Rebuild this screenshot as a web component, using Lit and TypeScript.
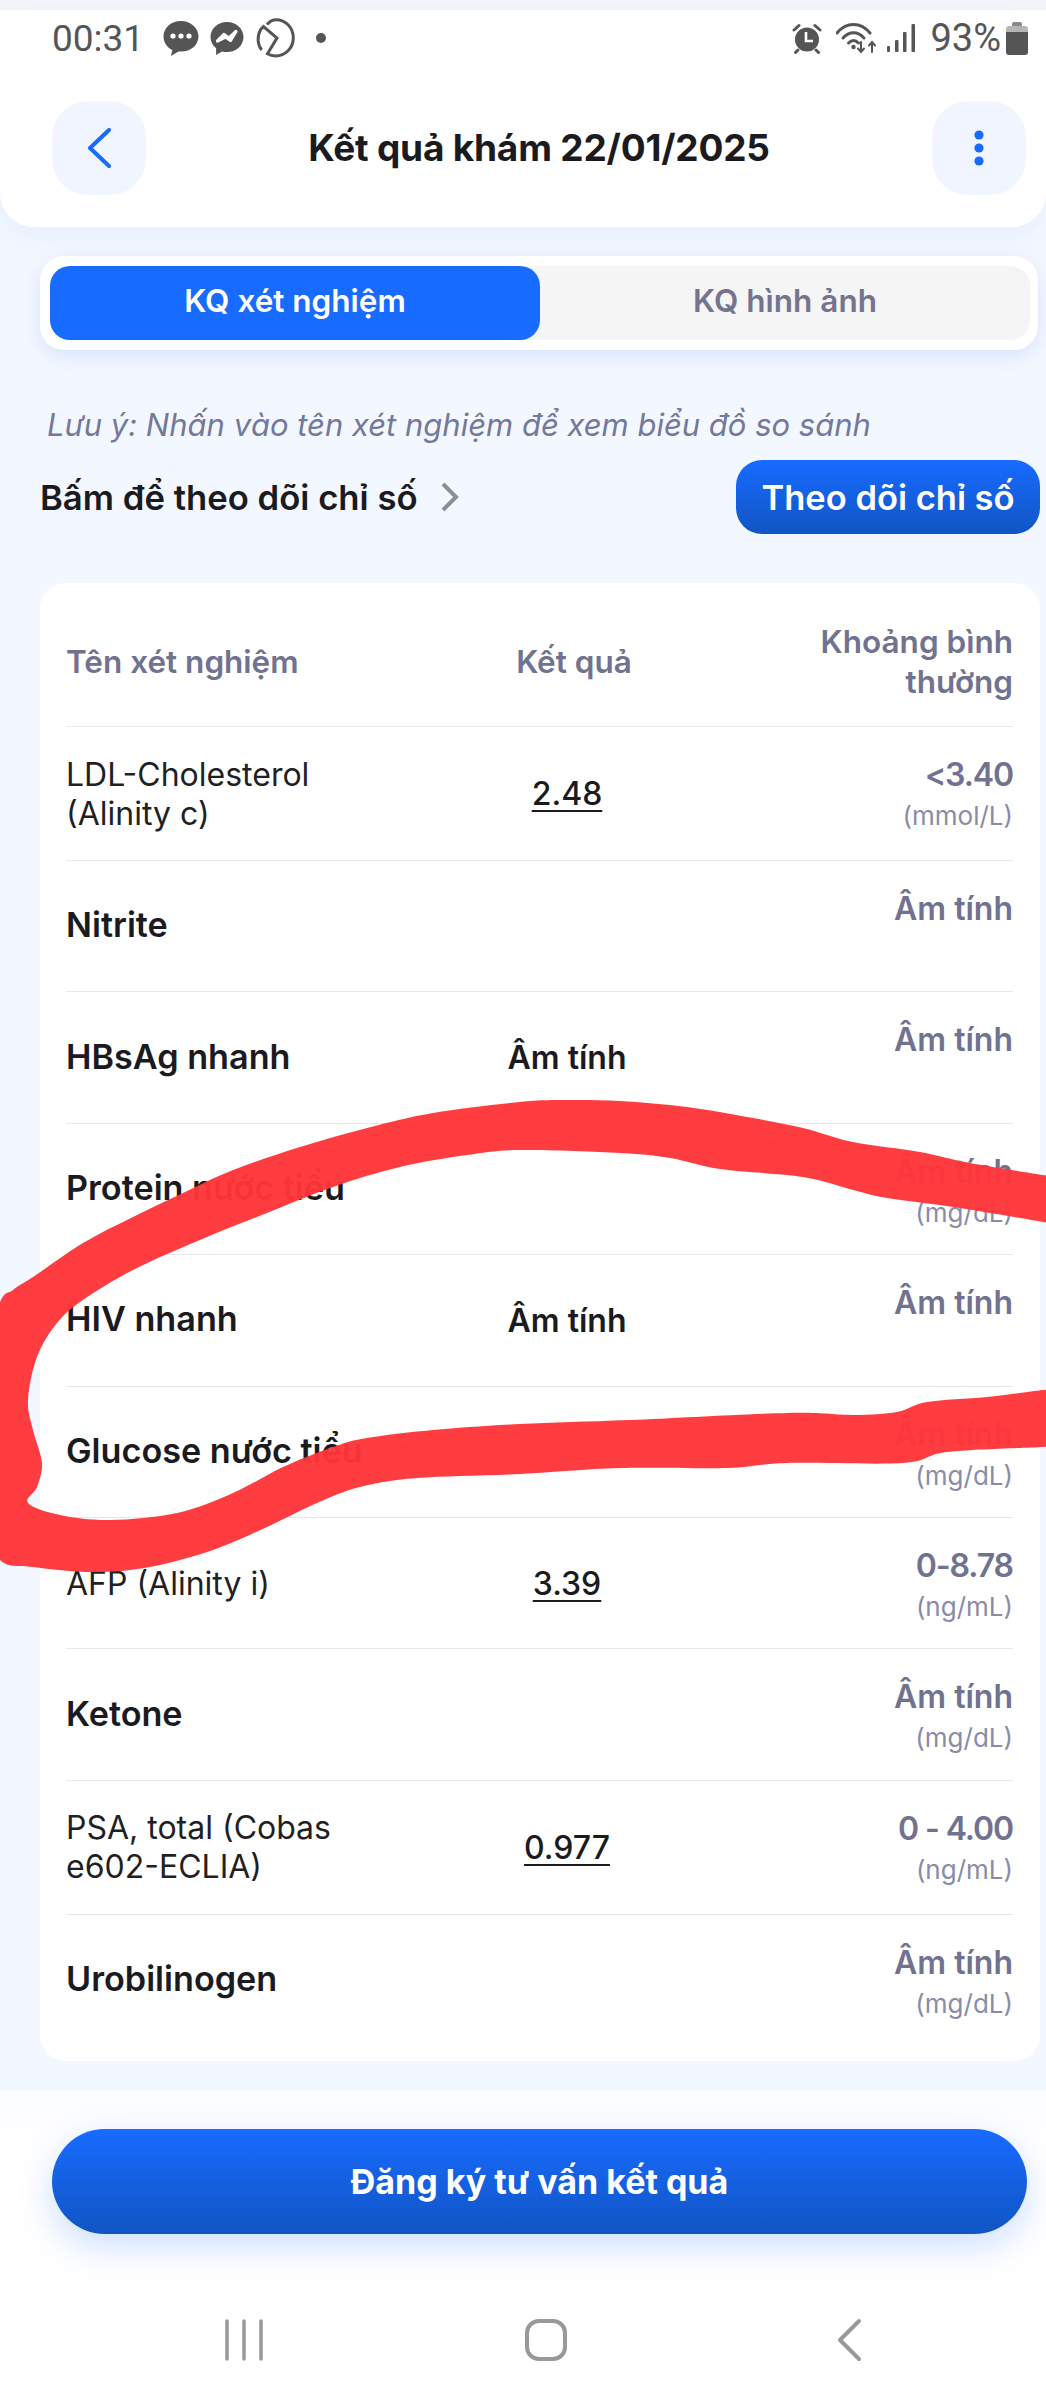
import { LitElement, html, css, svg } from "lit";
import { customElement } from "lit/decorators.js";

type Row = { name: string; bold: boolean; value?: string; link?: boolean; range: string; unit?: string };

const ROWS: Row[] = [
  { name: "LDL-Cholesterol (Alinity c)", bold: false, value: "2.48", link: true, range: "<3.40", unit: "(mmol/L)" },
  { name: "Nitrite", bold: true, range: "Âm tính" },
  { name: "HBsAg nhanh", bold: true, value: "Âm tính", range: "Âm tính" },
  { name: "Protein nước tiểu", bold: true, range: "Âm tính", unit: "(mg/dL)" },
  { name: "HIV nhanh", bold: true, value: "Âm tính", range: "Âm tính" },
  { name: "Glucose nước tiểu", bold: true, range: "Âm tính", unit: "(mg/dL)" },
  { name: "AFP (Alinity i)", bold: false, value: "3.39", link: true, range: "0-8.78", unit: "(ng/mL)" },
  { name: "Ketone", bold: true, range: "Âm tính", unit: "(mg/dL)" },
  { name: "PSA, total (Cobas e602-ECLIA)", bold: false, value: "0.977", link: true, range: "0 - 4.00", unit: "(ng/mL)" },
  { name: "Urobilinogen", bold: true, range: "Âm tính", unit: "(mg/dL)" },
];

// Outline of the hand-drawn red mark, traced from the right edge along the outside, then back along the inside.
const MARK_OUTER: number[][] = [
  [1060, 1178], [1043, 1175], [970, 1163], [920, 1152], [853, 1142], [803, 1128], [753, 1118], [687, 1107], [620, 1101], [563, 1100],
  [520, 1102], [433, 1113], [367, 1128], [300, 1147], [233, 1170], [183, 1193], [133, 1217], [83, 1243], [33, 1277], [13, 1290],
  [-2, 1307], [-30, 1400], [-30, 1500], [-2, 1558], [33, 1567], [93, 1572], [150, 1567], [213, 1550], [267, 1527], [317, 1503],
  [360, 1487], [417, 1478], [520, 1474], [620, 1468], [727, 1468], [787, 1463], [903, 1463], [947, 1452], [1043, 1447], [1060, 1446],
];
const MARK_INNER: number[][] = [
  [1060, 1388], [1043, 1390], [987, 1397], [927, 1402], [897, 1412], [853, 1415], [787, 1413], [630, 1420], [520, 1424], [433, 1430],
  [367, 1438], [333, 1447], [283, 1467], [233, 1493], [177, 1513], [110, 1520], [60, 1515], [28, 1503], [37, 1487], [42, 1463],
  [33, 1430], [28, 1400], [37, 1357], [57, 1323], [83, 1300], [133, 1270], [200, 1240], [267, 1213], [333, 1187], [400, 1167],
  [467, 1155], [520, 1150], [620, 1153], [670, 1158], [720, 1169], [803, 1177], [853, 1190], [887, 1198], [953, 1207], [1043, 1222], [1060, 1226],
];

function smooth(p: number[][]): string {
  let d = `M${p[0][0]} ${p[0][1]}`;
  for (let i = 0; i < p.length - 1; i++) {
    const a = p[Math.max(i - 1, 0)], b = p[i], c = p[i + 1], e = p[Math.min(i + 2, p.length - 1)];
    const c1x = b[0] + (c[0] - a[0]) / 6, c1y = b[1] + (c[1] - a[1]) / 6;
    const c2x = c[0] - (e[0] - b[0]) / 6, c2y = c[1] - (e[1] - b[1]) / 6;
    d += `C${c1x.toFixed(1)} ${c1y.toFixed(1)} ${c2x.toFixed(1)} ${c2y.toFixed(1)} ${c[0]} ${c[1]}`;
  }
  return d;
}
const MARK_D = smooth(MARK_OUTER) + smooth(MARK_INNER).replace(/^M/, "L") + "Z";

const iconBubble = svg`<svg width="36" height="37" viewBox="0 0 36 37"><path fill="#555" d="M18 1C8 1 .5 7.800.5 16.500c0 6 3.600 11 8.800 13.500l-1.300 6 7.500-4.600c.8.100 1.600.200 2.500.200 10 0 17.500-6.800 17.500-15.100S28 1 18 1z"/><circle cx="10" cy="16" r="2.600" fill="#fff"/><circle cx="18" cy="16" r="2.600" fill="#fff"/><circle cx="26" cy="16" r="2.600" fill="#fff"/></svg>`;
const iconMessenger = svg`<svg width="34" height="35" viewBox="0 0 34 35"><path fill="#555" d="M17 1C7.700 1 .5 7.700.5 16c0 4.600 2.200 8.600 5.600 11.300V34l6-3.500c1.600.4 3.200.6 4.900.6 9.300 0 16.500-6.800 16.500-15.100S26.300 1 17 1z"/><path fill="none" stroke="#fff" stroke-width="3.200" stroke-linejoin="round" stroke-linecap="round" d="M7.500 20l6.500-6.500 5 3.500 7-6.500-5.500 9-5-3.500z"/></svg>`;
const iconCircle = svg`<svg width="40" height="40" viewBox="0 0 40 40"><path fill="none" stroke="#555" stroke-width="3" d="M12 6.500C15 3 18.500 1.700 21 1.700c9.800 0 17.300 8 17.300 18.300 0 10-8 18-17.800 18-3 0-5.500-.7-8-2.200L22 20 8.500 8.500l-2.800 3c-4 7-3.200 15.500 1 20.500"/></svg>`;
const iconAlarm = svg`<svg width="30" height="31" viewBox="0 0 30 31"><path fill="none" stroke="#555" stroke-width="3" stroke-linecap="round" d="M2 7l5-4.500M28 7l-5-4.500M6 27l-2.500 2.500M24 27l2.500 2.500"/><circle cx="15" cy="16.500" r="12" fill="#555"/><path fill="none" stroke="#fff" stroke-width="2.600" d="M14 9v9h7"/></svg>`;
const iconWifi = svg`<svg width="44" height="32" viewBox="0 0 44 32"><g fill="none" stroke="#555" stroke-width="3" stroke-linecap="round"><path d="M1 11C10-.5 25-.5 34 11"/><path d="M7 16c6-7 15-7 21 0"/><path d="M12.500 21c3.500-3.500 6.500-3.500 10 0"/><path d="M25 20v10M22 26.500l3 3.500 3-3.500M36 30V20M33 23.500l3-3.500 3 3.500" stroke-width="2"/></g><circle cx="17.500" cy="25" r="2.200" fill="#555"/></svg>`;
const iconSignal = svg`<svg width="29" height="30" viewBox="0 0 29 30"><g fill="#555"><rect x="0" y="23" width="3" height="6" rx="1"/><rect x="8" y="17" width="3.500" height="12" rx="1"/><rect x="16" y="9" width="3.500" height="20" rx="1"/><rect x="24.500" y="1" width="3.500" height="28" rx="1"/></g></svg>`;
const iconBattery = svg`<svg width="22" height="33" viewBox="0 0 22 33"><rect x="6" y="0" width="10" height="5" rx="2" fill="#8a8a8a"/><path d="M3 4h16a3 3 0 0 1 3 3v3H0V7a3 3 0 0 1 3-3z" fill="#b5b5b5"/><path d="M0 10h22v20a3 3 0 0 1-3 3H3a3 3 0 0 1-3-3z" fill="#555"/></svg>`;

@customElement("app-root")
export class AppRoot extends LitElement {
  static styles = css`
    :host { display: block; width: 1046px; height: 2400px; background: #fff; font-family: Inter, "Noto Sans", sans-serif; color: #1b1b1f; position: relative; overflow: hidden; }
    .top-strip { height: 10px; background: #f3f5f9; }
    .shell { background: #f3f7ff; }
    .header { position: relative; z-index: 1; background: #fff; height: 217px; border-radius: 0 0 34px 34px; box-shadow: 0 8px 30px rgba(60,110,240,.07); display: flex; flex-direction: column; }
    .status { height: 56px; display: flex; align-items: center; padding: 0 18px 0 52px; color: #555; font-family: Roboto, sans-serif; font-size: 37px; }
    .status .time { width: 111px; }
    .status .left { display: flex; align-items: center; gap: 11px; }
    .status .dot { width: 10px; height: 10px; border-radius: 50%; background: #555; margin-left: 10px; }
    .status .spacer { flex: 1; }
    .status .right { display: flex; align-items: center; }
    .status .pct { font-size: 38px; margin: 0 5px 0 14px; }
    .gap-a { width: 14px; }
    .gap-b { width: 7px; }
    .nav { margin-top: 35px; padding: 0 20px 0 52px; display: flex; align-items: center; justify-content: space-between; }
    .round { width: 94px; height: 94px; border-radius: 36px; background: #f1f5ff; display: flex; align-items: center; justify-content: center; }
    .title { font-size: 37px; font-weight: 700; line-height: 44px; color: #1b1b1f; letter-spacing: -.2px; }

    .main { height: 1863px; padding: 29px 6px 0 40px; box-sizing: border-box; }
    .tabs { margin-right: 2px; height: 94px; border-radius: 24px; background: #fff; box-shadow: 0 6px 18px rgba(60,110,240,.14); padding: 10px 8px 10px 10px; box-sizing: border-box; display: flex; }
    .tabs-inner { flex: 1; display: flex; background: #f5f5f6; border-radius: 20px; }
    .tab { display: flex; align-items: center; justify-content: center; padding-bottom: 5px; font-size: 31.500px; font-weight: 600; border-radius: 20px; color: #74748f; flex: 1; }
    .tab.on { flex: 0 0 490px; background: #186bff; color: #fff; }
    .note { margin: 55px 0 0 7px; line-height: 40px; font-size: 31px; font-style: italic; color: #74789a; }
    .act { margin-top: 15px; display: flex; align-items: center; justify-content: space-between; }
    .act-l { display: flex; align-items: center; gap: 22px; font-size: 34.700px; font-weight: 600; color: #1b1b1f; }
    .act-b { width: 304px; height: 74px; border-radius: 26px; background: linear-gradient(#186bff, #1155c4); color: #fff; font-size: 34.500px; font-weight: 600; display: flex; align-items: center; justify-content: center; }

    .card { margin-top: 49px; height: 1478px; box-sizing: border-box; background: #fff; border-radius: 26px; padding: 0 27px 0 26px; }
    .grid { display: grid; grid-template-columns: 401px 200px 1fr; }
    .thead { height: 144px; padding-top: 14px; box-sizing: border-box; align-items: center; border-bottom: 1.500px solid #e8e9ee; color: #70728f; font-size: 31.500px; font-weight: 600; line-height: 40px; }
    .thead .c { text-align: center; padding-left: 14px; }
    .thead .r { text-align: right; }
    .row { min-height: 131.400px; box-sizing: border-box; border-bottom: 1.500px solid #e8e9ee; align-items: center; }
    .row:last-child { border-bottom: none; }
    .name { padding: 27.500px 0; font-size: 32px; line-height: 39px; font-weight: 400; color: #1f1f24; max-width: 320px; }
    .name.b { padding: 26px 0 29px; font-size: 34.200px; font-weight: 600; color: #1b1b1f; max-width: none; }
    .val { text-align: center; font-size: 32px; font-weight: 600; color: #1b1b1f; }
    .val.link { font-weight: 500; text-decoration: underline; text-underline-offset: 5px; text-decoration-thickness: 2px; }
    .rng { align-self: start; padding-top: 28px; text-align: right; }
    .rng .v { font-size: 32px; font-weight: 600; line-height: 40px; color: #70728f; }
    .rng .v.num { letter-spacing: -1.100px; }
    .rng .u { font-size: 26px; line-height: 42px; color: #8a8ca6; }

    .footer { height: 310px; box-sizing: border-box; padding: 39px 19px 0 52px; background: linear-gradient(#fbfcff, #fff 60px); }
    .cta { height: 105px; border-radius: 53px; background: linear-gradient(#186bff, #1155c4); box-shadow: 0 12px 36px rgba(24,107,255,.22); color: #fff; font-size: 34px; font-weight: 700; display: flex; align-items: center; justify-content: center; }
    .sysnav { margin-top: 84px; display: grid; grid-template-columns: 301px 312px 26px; padding-left: 171px; align-items: center; }
    .mark { position: absolute; left: 0; top: 0; pointer-events: none; z-index: 2; }
  `;

  render() {
    return html`
      <div class="top-strip"></div>
      <div class="shell">
        <header class="header">
          <div class="status">
            <span class="time">00:31</span>
            <span class="left">${iconBubble}${iconMessenger}${iconCircle}<span class="dot"></span></span>
            <span class="spacer"></span>
            <span class="right">
              ${iconAlarm}<span class="gap-a"></span>${iconWifi}<span class="gap-b"></span>${iconSignal}
              <span class="pct">93%</span>${iconBattery}
            </span>
          </div>
          <div class="nav">
            <div class="round"><svg width="26" height="40" viewBox="0 0 26 40"><path d="M23 2L4 20l19 18" fill="none" stroke="#186bff" stroke-width="4" stroke-linecap="round" stroke-linejoin="round"/></svg></div>
            <div class="title">Kết quả khám 22/01/2025</div>
            <div class="round"><svg width="10" height="36" viewBox="0 0 10 36"><circle cx="5" cy="5" r="4.600" fill="#186bff"/><circle cx="5" cy="18" r="4.600" fill="#186bff"/><circle cx="5" cy="31" r="4.600" fill="#186bff"/></svg></div>
          </div>
        </header>
        <main class="main">
          <div class="tabs"><div class="tabs-inner">
            <div class="tab on">KQ xét nghiệm</div>
            <div class="tab">KQ hình ảnh</div>
          </div></div>
          <div class="note">Lưu ý: Nhấn vào tên xét nghiệm để xem biểu đồ so sánh</div>
          <div class="act">
            <div class="act-l">
              <span>Bấm để theo dõi chỉ số</span>
              <svg width="20" height="32" viewBox="0 0 20 32"><path d="M3 3l13 13L3 29" fill="none" stroke="#8d8d93" stroke-width="4"/></svg>
            </div>
            <div class="act-b">Theo dõi chỉ số</div>
          </div>
          <section class="card">
            <div class="grid thead">
              <div>Tên xét nghiệm</div>
              <div class="c">Kết quả</div>
              <div class="r">Khoảng bình<br />thường</div>
            </div>
            ${ROWS.map(
              (r) => html`<div class="grid row">
                <div class="name ${r.bold ? "b" : ""}">${r.name}</div>
                <div class="val ${r.link ? "link" : ""}">${r.value ?? ""}</div>
                <div class="rng">
                  <div class="v ${/\d/.test(r.range) ? "num" : ""}">${r.range}</div>
                  ${r.unit ? html`<div class="u">${r.unit}</div>` : ""}
                </div>
              </div>`
            )}
          </section>
        </main>
        <footer class="footer">
          <div class="cta">Đăng ký tư vấn kết quả</div>
          <div class="sysnav">
            <svg width="40" height="42" viewBox="0 0 40 42"><path d="M4 2v38M21 2v38M38 2v38" stroke="#999" stroke-width="3.500" stroke-linecap="round" fill="none"/></svg>
            <svg width="44" height="44" viewBox="0 0 44 44"><rect x="3" y="3" width="38" height="38" rx="12" fill="none" stroke="#999" stroke-width="4"/></svg>
            <svg width="26" height="44" viewBox="0 0 26 44"><path d="M23 3L4 22l19 19" fill="none" stroke="#999" stroke-width="4" stroke-linecap="round" stroke-linejoin="round"/></svg>
          </div>
        </footer>
      </div>
      <svg class="mark" width="1046" height="2400" viewBox="0 0 1046 2400"><path d=${MARK_D} fill="#ff3538" fill-opacity=".96"/></svg>
    `;
  }
}
